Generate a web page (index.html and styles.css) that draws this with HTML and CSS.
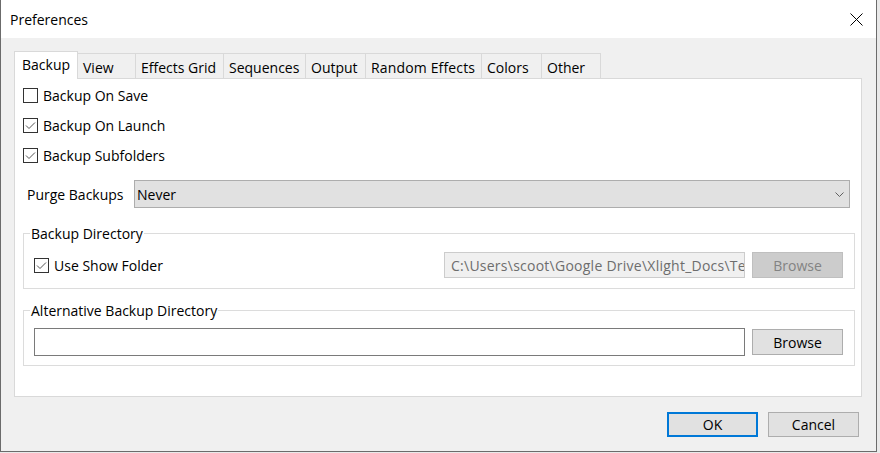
FILE: index.html
```html
<!DOCTYPE html>
<html>
<head>
<meta charset="utf-8">
<title>Preferences</title>
<link rel="stylesheet" href="styles.css">
</head>
<body>
<div class="window">
  <div class="titlebar">
    <span class="title">Preferences</span>
    <svg class="close" width="13" height="13" viewBox="0 0 13 13"><path d="M0.5 0.5 L12.5 12.5 M12.5 0.5 L0.5 12.5" stroke="#000" stroke-width="1" fill="none"/></svg>
  </div>
  <div class="content">
    <div class="tabs">
      <div class="tab sel t-backup">Backup</div>
      <div class="tab t-view">View</div>
      <div class="tab t-effects">Effects Grid</div>
      <div class="tab t-seq">Sequences</div>
      <div class="tab t-output">Output</div>
      <div class="tab t-random">Random Effects</div>
      <div class="tab t-colors">Colors</div>
      <div class="tab t-other">Other</div>
      <div class="tab-fill"></div>
    </div>
    <div class="panel">
      <div class="check-row">
        <span class="cb"></span><span class="cb-label">Backup On Save</span>
      </div>
      <div class="check-row">
        <span class="cb"><svg width="13" height="13" viewBox="0 0 13 13"><polyline points="2,6.5 5,9.5 11,3.5" fill="none" stroke="#555" stroke-width="1"/></svg></span><span class="cb-label">Backup On Launch</span>
      </div>
      <div class="check-row">
        <span class="cb"><svg width="13" height="13" viewBox="0 0 13 13"><polyline points="2,6.5 5,9.5 11,3.5" fill="none" stroke="#555" stroke-width="1"/></svg></span><span class="cb-label">Backup Subfolders</span>
      </div>
      <div class="purge-row">
        <span class="purge-label">Purge Backups</span>
        <div class="select">
          <span class="select-text">Never</span>
          <svg class="chev" width="9" height="5" viewBox="0 0 9 5"><polyline points="0.5,0.5 4.5,4.5 8.5,0.5" fill="none" stroke="#606060" stroke-width="1"/></svg>
        </div>
      </div>
      <fieldset class="group g1">
        <legend>Backup Directory</legend>
        <div class="group-row">
          <span class="cb"><svg width="13" height="13" viewBox="0 0 13 13"><polyline points="2,6.5 5,9.5 11,3.5" fill="none" stroke="#555" stroke-width="1"/></svg></span><span class="cb-label">Use Show Folder</span>
          <div class="textbox disabled">C:\Users\scoot\Google Drive\Xlight_Docs\Test</div>
          <div class="btn browse disabled">Browse</div>
        </div>
      </fieldset>
      <fieldset class="group g2">
        <legend>Alternative Backup Directory</legend>
        <div class="group-row">
          <div class="textbox alt"></div>
          <div class="btn browse">Browse</div>
        </div>
      </fieldset>
    </div>
    <div class="buttons">
      <div class="btn ok">OK</div>
      <div class="btn">Cancel</div>
    </div>
  </div>
</div>
</body>
</html>
```

FILE: styles.css
```css
html, body {
  margin: 0;
  background: #e9e9e9;
}
body {
  font-family: "Open Sans", "Noto Sans", sans-serif;
  font-size: 14px;
  color: #000;
}
.window {
  width: 877px;
  height: 452px;
  box-sizing: border-box;
  border: 1px solid #6b6b6b;
  border-top: none;
  background: #f0f0f0;
  display: flex;
  flex-direction: column;
}
.titlebar {
  height: 38px;
  flex: none;
  background: #fff;
  display: flex;
  align-items: center;
  justify-content: space-between;
  padding: 0 13px 0 9px;
}
.title {
  line-height: 19px;
}
.close {
  display: block;
}
.content {
  flex: 1;
  display: flex;
  flex-direction: column;
  padding: 13px 14px 0 13px;
}
.tabs {
  display: flex;
  align-items: flex-end;
  height: 28px;
}
.tab {
  box-sizing: border-box;
  height: 26px;
  border-top: 1px solid #d9d9d9;
  border-right: 1px solid #d9d9d9;
  border-bottom: 1px solid #d9d9d9;
  padding: 4px 0 0 5px;
  line-height: 19px;
  white-space: nowrap;
  background: #f0f0f0;
  flex: none;
}
.tab.sel {
  height: 28px;
  border-left: 1px solid #d9d9d9;
  border-bottom: none;
  background: #fff;
  padding: 3px 0 0 7px;
}
.t-backup { width: 64px; }
.t-view { width: 58px; }
.t-effects { width: 88px; }
.t-seq { width: 82px; }
.t-output { width: 60px; }
.t-random { width: 116px; letter-spacing: 0.15px; }
.t-colors { width: 60px; }
.t-other { width: 59px; }
.tab-fill {
  flex: 1;
  height: 0;
  border-bottom: 1px solid #d9d9d9;
}
.panel {
  background: #fff;
  border: 1px solid #d9d9d9;
  border-top: none;
  padding: 1px 0 30px 0;
}
.check-row {
  display: flex;
  align-items: center;
  height: 30px;
  padding-left: 8px;
}
.cb {
  box-sizing: border-box;
  width: 15px;
  height: 15px;
  border: 1px solid #333;
  background: #fff;
  flex: none;
  display: flex;
}
.cb svg {
  display: block;
}
.cb-label {
  margin-left: 5px;
  line-height: 19px;
  white-space: nowrap;
}
.purge-row {
  display: flex;
  align-items: center;
  height: 28px;
  margin-top: 10px;
  padding-left: 12px;
}
.purge-label {
  width: 107px;
  flex: none;
  line-height: 19px;
}
.select {
  flex: 1;
  box-sizing: border-box;
  height: 28px;
  margin-right: 11px;
  border: 1px solid #adadad;
  background: #e1e1e1;
  display: flex;
  align-items: center;
  padding: 0 5px 0 2px;
}
.select-text {
  flex: 1;
  line-height: 19px;
}
.chev {
  display: block;
}
.group {
  margin: 0 6px 0 8px;
  padding: 0 11px 10px 6px;
  border: 1px solid #dcdcdc;
  min-width: 0;
}
.group legend {
  padding: 0 1px;
  line-height: 19px;
}
.g1 {
  margin-top: 16px;
}
.g2 {
  margin-top: 12px;
  padding-bottom: 9px;
}
.g2 .group-row {
  margin-top: -1px;
}
.group-row {
  display: flex;
  align-items: center;
  padding-left: 4px;
  padding-top: 9px;
  min-height: 26px;
}
.textbox {
  box-sizing: border-box;
  white-space: nowrap;
  overflow: hidden;
  line-height: 19px;
  display: flex;
  align-items: center;
}
.textbox.disabled {
  width: 301px;
  height: 26px;
  margin-left: auto;
  background: #f0f0f0;
  border: 1px solid #cccccc;
  color: #6d6d6d;
  padding-left: 6px;
  letter-spacing: 0.25px;
}
.textbox.alt {
  flex: 1;
  height: 28px;
  background: #fff;
  border: 1px solid #7a7a7a;
}
.btn {
  box-sizing: border-box;
  width: 91px;
  height: 25px;
  border: 1px solid #adadad;
  background: #e1e1e1;
  display: flex;
  align-items: center;
  justify-content: center;
  line-height: 19px;
  flex: none;
}
.btn.browse {
  height: 26px;
  margin-left: 7px;
}
.btn.disabled {
  background: #cccccc;
  border-color: #bfbfbf;
  color: #838383;
}
.btn.ok {
  border: 2px solid #0078d7;
}
.buttons {
  display: flex;
  justify-content: flex-end;
  gap: 10px;
  margin-top: 15px;
  padding-right: 3px;
}
```
